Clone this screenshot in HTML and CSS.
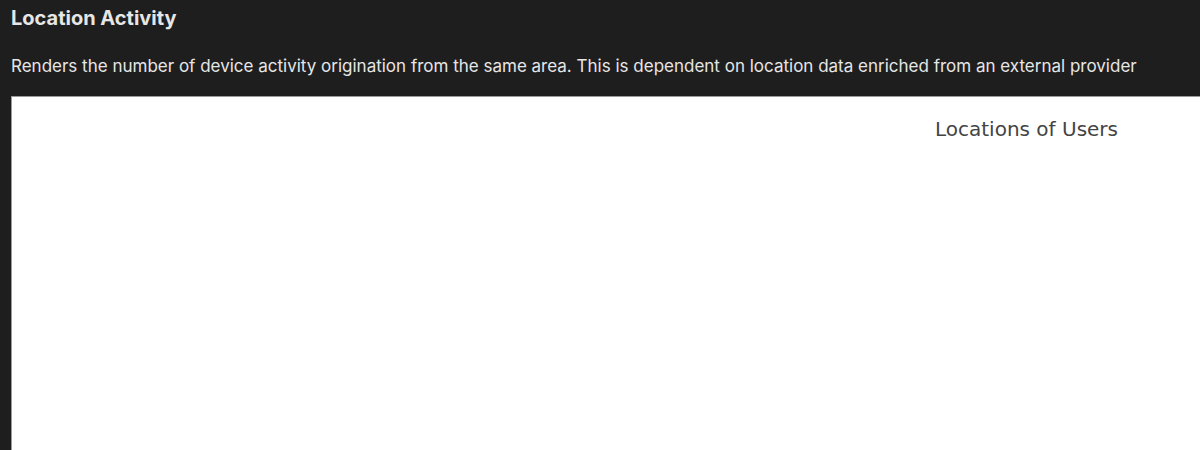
FILE: index.html
```html
<!DOCTYPE html>
<html>
<head>
<meta charset="utf-8">
<link rel="stylesheet" href="styles.css">
</head>
<body>
<section class="card">
  <h2 class="card-title">Location Activity</h2>
  <p class="card-desc">Renders the number of device activity origination from the same area. This is dependent on location data enriched from an external provider</p>
  <div class="chart">
    <div class="chart-title">Locations of Users</div>
  </div>
</section>
</body>
</html>
```

FILE: styles.css
```css
html, body {
  margin: 0;
  padding: 0;
  background: #1e1e1e;
  height: 100%;
  overflow: hidden;
}
.card {
  padding: 0 0 0 11px;
  font-family: Inter, "Liberation Sans", sans-serif;
  color: #e6e6e6;
}
.card-title {
  margin: 0;
  padding-top: 5px;
  font-size: 20px;
  font-weight: 700;
  line-height: 26px;
}
.card-desc {
  margin: 0;
  padding-top: 24px;
  font-size: 17px;
  line-height: 22px;
}
.chart {
  margin-top: 19px;
  background: #ffffff;
  border-top: 1px solid #9a9a9a;
  border-left: 1px solid #9a9a9a;
  height: 360px;
  display: flex;
  justify-content: flex-end;
}
.chart-title {
  font-family: "DejaVu Sans", Verdana, sans-serif;
  font-size: 20px;
  color: #444444;
  padding: 20px 82px 0 0;
  line-height: 24px;
}
```
